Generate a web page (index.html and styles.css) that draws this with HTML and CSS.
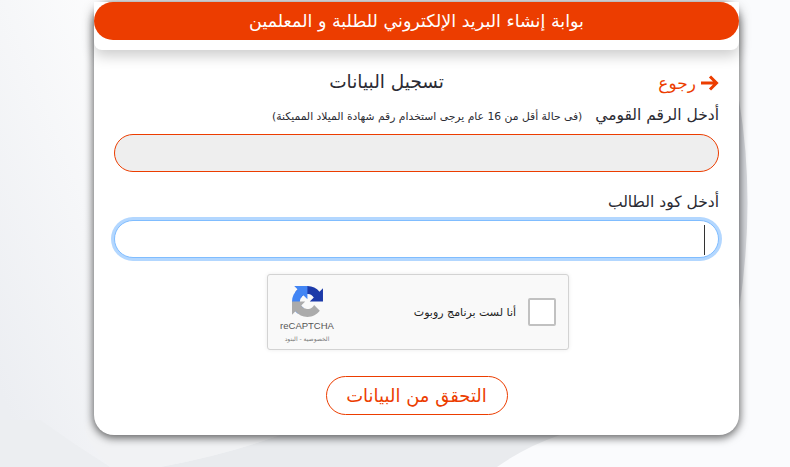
FILE: index.html
```html
<!DOCTYPE html>
<html lang="ar" dir="rtl">
<head>
<meta charset="utf-8">
<title>بوابة إنشاء البريد الإلكتروني</title>
<link rel="stylesheet" href="styles.css">
</head>
<body>
<svg class="page-bg" width="790" height="467" viewBox="0 0 790 467" aria-hidden="true">
  <defs>
    <linearGradient id="leftShade" x1="1" y1="0" x2="0.2" y2="1">
      <stop offset="0" stop-color="#ffffff"/>
      <stop offset="1" stop-color="#eceef2"/>
    </linearGradient>
  </defs>
  <rect x="0" y="0" width="790" height="467" fill="#fafbfd"/>
  <polygon points="0,0 150,0 150,467 0,467" fill="url(#leftShade)"/>
  <path d="M40 420 Q75 445 110 467 L0 467 0 420z" fill="#eceef1"/>
  <path d="M110 467 L160 467 Q225 455 280 435 L150 420 90 420 Q75 430 110 467z" fill="#f1f2f4"/>
  <path d="M160 467 Q225 455 280 435 L560 435 Q525 447 497 467z" fill="#e9ebee"/>
  <path d="M739 100 Q756 200 739 310z" fill="#d9dbe0"/>
</svg>
<div class="card">
  <div class="card-head">
    <h1 class="card-title">بوابة إنشاء البريد الإلكتروني للطلبة و المعلمين</h1>
  </div>
  <div class="card-body">
    <div class="top-row">
      <a class="back-link" href="#">
        <svg width="19" height="16" viewBox="0 0 19 16"><path d="M1 8h15M10 1.5 16.5 8 10 14.5" fill="none" stroke="#ec3d00" stroke-width="3"/></svg>
        رجوع
      </a>
      <h2 class="form-title">تسجيل البيانات</h2>
    </div>
    <form class="reg-form">
      <label class="field-label">أدخل الرقم القومي <small>(فى حالة أقل من 16 عام يرجى استخدام رقم شهادة الميلاد المميكنة)</small></label>
      <input class="field-input field-disabled" type="text" disabled>
      <label class="field-label label-second">أدخل كود الطالب</label>
      <div class="input-focus"><span class="caret"></span></div>
      <div class="captcha">
        <span class="captcha-check"></span>
        <span class="captcha-text">أنا لست برنامج روبوت</span>
        <div class="captcha-logo">
          <svg width="31" height="31" viewBox="0 0 64 64">
            <path d="M64 31.955l-.033-1.37V4.687l-7.16 7.16C50.948 4.674 42.033.093 32.05.093c-10.4 0-19.622 4.96-25.458 12.64l11.736 11.86a15.55 15.55 0 0 1 4.754-5.334c2.05-1.6 4.952-2.906 8.968-2.906.485 0 .86.057 1.135.163 4.976.393 9.288 3.14 11.828 7.124l-8.307 8.307 26.3.004" fill="#1c3aa9"/>
            <path d="M31.862.001l-1.37.033H4.594l7.16 7.16C4.58 13.053 0 21.968 0 31.95c0 10.4 4.96 19.622 12.64 25.458L24.5 45.672a15.55 15.55 0 0 1-5.334-4.754c-1.6-2.05-2.906-4.952-2.906-8.968 0-.485.057-.86.163-1.135.393-4.976 3.14-9.288 7.124-11.828l8.307 8.307.004-26.3" fill="#4285f4"/>
            <path d="M.001 31.95l.033 1.37v25.898l7.16-7.16c5.86 7.173 14.775 11.754 24.757 11.754 10.4 0 19.622-4.96 25.458-12.64l-11.736-11.86a15.55 15.55 0 0 1-4.754 5.334c-2.05 1.6-4.952 2.906-8.968 2.906-.485 0-.86-.057-1.135-.163-4.976-.393-9.288-3.14-11.828-7.124l8.307-8.307-26.3-.004" fill="#ababab"/>
          </svg>
          <span class="captcha-brand">reCAPTCHA</span>
          <span class="captcha-links">الخصوصية - البنود</span>
        </div>
      </div>
      <button class="submit-btn" type="button">التحقق من البيانات</button>
    </form>
  </div>
</div>
</body>
</html>
```

FILE: styles.css
```css
* { box-sizing: border-box; }
html, body { margin: 0; height: 467px; overflow: hidden; }
body { background: #fff; font-family: "DejaVu Sans", "Noto Sans", sans-serif; color: #2b2b33; padding: 2px 51px 0 94px; }
.page-bg { position: absolute; left: 0; top: 0; }

.card { position: relative; width: 645px; height: 433px; background: #fff; border-radius: 20px; box-shadow: 0 2px 8px 1px rgba(0,0,0,.6); }
.card-head { height: 48px; background: #fff; border-radius: 0 0 8px 8px; box-shadow: 0 6px 14px rgba(0,0,0,.2); }
.card-title { margin: 0; height: 38px; line-height: 38px; background: #ec3d00; border-radius: 19px; color: #fff; font-size: 17.5px; font-weight: 400; text-align: center; }

.card-body { padding: 22px 20px 0; }
.top-row { display: flex; align-items: center; height: 22px; }
.back-link { display: flex; align-items: center; gap: 4px; width: 275px; color: #ec3d00; font-size: 17px; text-decoration: none; }
.form-title { margin: 0 0 4px; font-size: 18.5px; font-weight: 400; color: #2b2b33; }

.field-label { display: block; margin-top: 11px; font-size: 15.5px; line-height: 20px; }
.field-label small { margin-right: 8px; font-size: 10.75px; }
.label-second { margin-top: 20px; }
.field-input { display: block; width: 605px; height: 38px; margin-top: 7px; border: 1px solid #ec3d00; border-radius: 19px; }
.field-disabled { background: #eee; }
.input-focus { position: relative; width: 605px; height: 38px; margin-top: 8px; background: #fff; border: 1px solid #80bdff; border-radius: 19px; box-shadow: 0 0 0 3px #b3d7ff; }
.caret { position: absolute; right: 13px; top: 4px; width: 1px; height: 30px; background: #333; }

.captcha { display: flex; align-items: center; width: 302px; height: 76px; margin: 16px 150px 0 auto; padding: 0 12px; background: #f9f9f9; border: 1px solid #d3d3d3; border-radius: 3px; box-shadow: 0 0 4px rgba(0,0,0,.08); }
.captcha-check { width: 28px; height: 28px; background: #fff; border: 2px solid #c1c1c1; border-radius: 2px; }
.captcha-text { margin-right: 12px; font-size: 11px; color: #222; }
.captcha-logo { display: flex; flex-direction: column; align-items: center; margin-right: auto; margin-left: -3px; padding-top: 5px; width: 60px; }
.captcha-brand { font-family: "Liberation Sans", sans-serif; font-size: 9.5px; line-height: 12px; margin-top: 3px; color: #555; }
.captcha-links { font-size: 6px; line-height: 10px; margin-top: 2px; color: #777; }

.submit-btn { display: block; width: 182px; height: 39px; margin: 26px auto 0; background: #fff; border: 1px solid #ec3d00; border-radius: 20px; color: #ec3d00; font-family: inherit; font-size: 18px; }
```
